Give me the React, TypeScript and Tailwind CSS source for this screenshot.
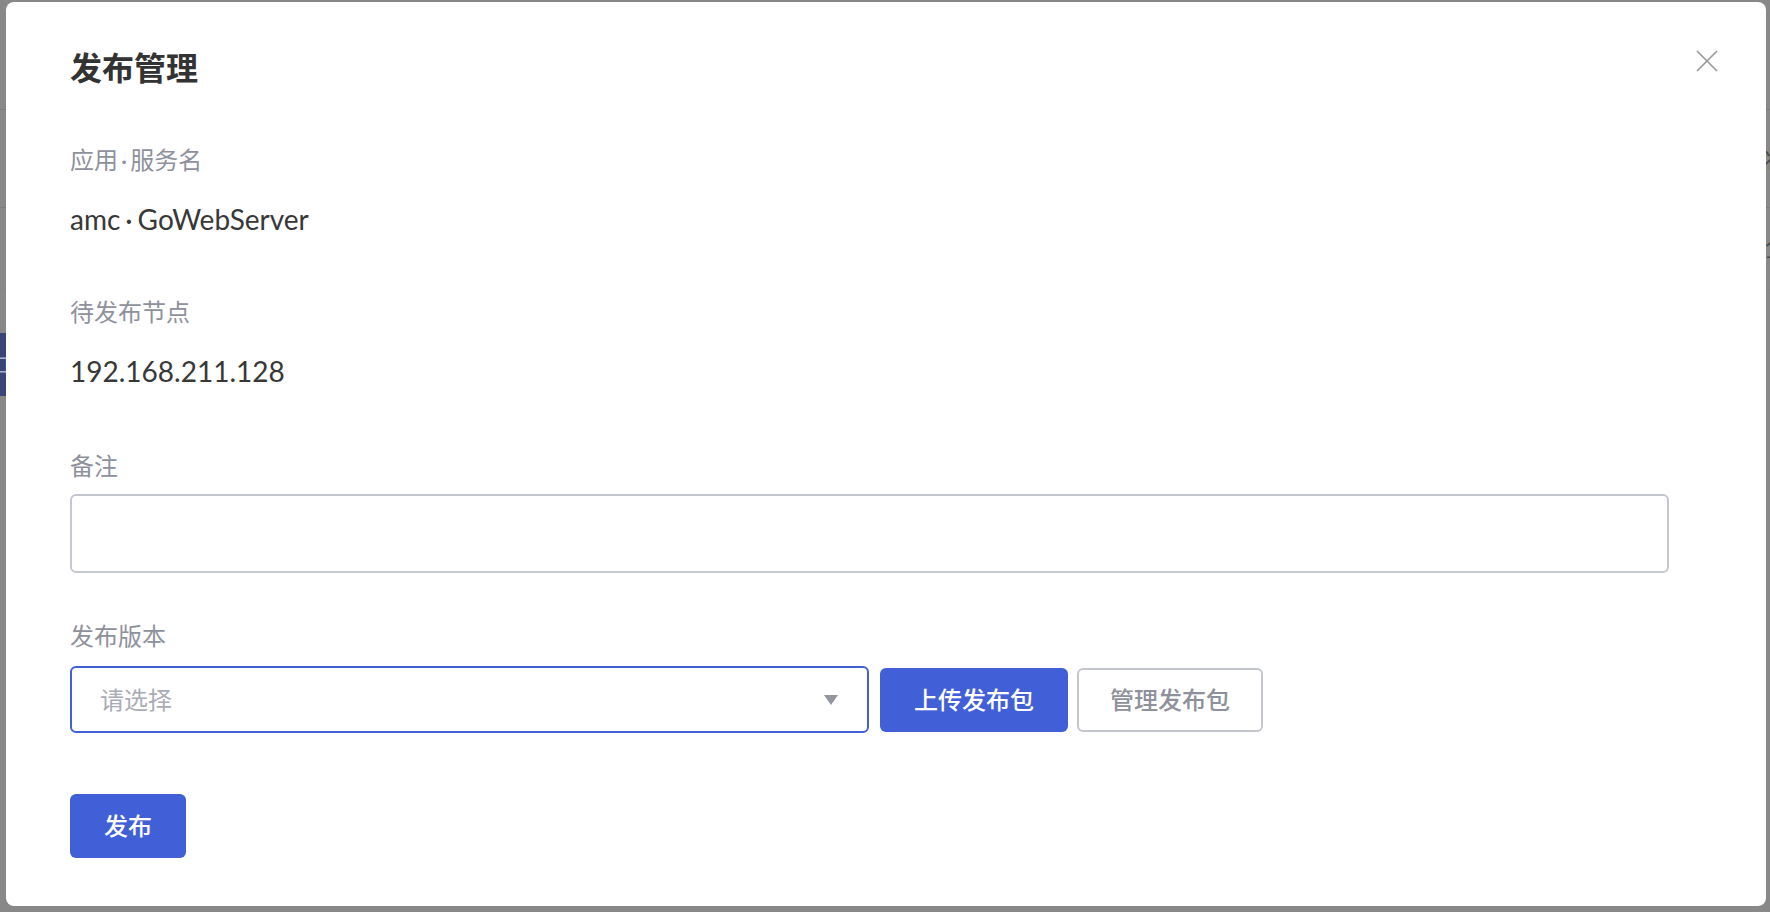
import { useState } from "react";

const labelCls = "text-[24px] leading-[32px] text-[#8e919c]";
const valueCls = "text-[28px] leading-[40px] text-[#383838]";

function BackgroundPage() {
  // the page that sits under the dimmed overlay, only its edges show
  return (
    <div className="flex h-full flex-col">
      <div className="h-[110px] shrink-0 border-b border-[#7d7d7d]" />
      <div className="flex h-[98px] shrink-0 items-center justify-end border-b border-[#7d7d7d]">
        <span className="w-[6px] overflow-hidden whitespace-nowrap text-[24px] text-[#4a4a4a]">状态</span>
      </div>
      <div className="flex h-[82px] shrink-0 items-center justify-end border-b border-[#848484]">
        <span className="w-[6px] overflow-hidden whitespace-nowrap text-[24px] text-[#4a4a4a]">1台</span>
      </div>
      <div className="mt-[43px] flex h-[63px] w-[120px] items-center bg-[#3a4577]">
        <span className="-ml-[10px] text-[20px] text-[#aab0c8]">口</span>
      </div>
    </div>
  );
}

function CloseIcon() {
  return (
    <svg viewBox="0 0 22 22" className="h-[22px] w-[22px]" fill="none" stroke="#999" strokeWidth="1.7">
      <path d="M1 1 L21 21 M21 1 L1 21" />
    </svg>
  );
}

export default function App() {
  const [note, setNote] = useState("");

  return (
    <div className="relative h-[912px] w-full overflow-hidden bg-[#888888] font-['Lato','Noto_Sans_CJK_SC',sans-serif]">
      <BackgroundPage />

      <div className="absolute left-[6px] top-[2px] h-[904px] w-[1760px] rounded-[8px] bg-white pl-[64px] pt-[44px]">
        <button type="button" className="absolute right-[48px] top-[48px]" aria-label="close">
          <CloseIcon />
        </button>

        <h2 className="text-[32px] font-bold leading-[44px] text-[#333]">发布管理</h2>

        <div className={`mt-[54px] ${labelCls}`}>
          应用<span className="mx-[3px]">·</span>服务名
        </div>
        <div className={`mt-[23px] ${valueCls}`}>
          amc<span className="mx-[5px]">·</span>GoWebServer
        </div>

        <div className={`mt-[57px] ${labelCls}`}>待发布节点</div>
        <div className={`mt-[23px] ${valueCls}`}>192.168.211.128</div>

        <div className={`mt-[59px] ${labelCls}`}>备注</div>
        <textarea
          value={note}
          onChange={(e) => setNote(e.target.value)}
          className="mt-[12px] block h-[79px] w-[1599px] resize-none rounded-[6px] border-2 border-[#c5c7ce] px-[28px] py-[16px] text-[24px] text-[#333] outline-none"
        />

        <div className={`mt-[47px] ${labelCls}`}>发布版本</div>
        <div className="mt-[14px] flex items-center">
          <div className="flex h-[67px] w-[799px] items-center justify-between rounded-[6px] border-2 border-[#4160d8] pl-[28px] pr-[29px]">
            <span className="text-[24px] text-[#a9acb6]">请选择</span>
            <svg viewBox="0 0 14 10" className="h-[10px] w-[14px]">
              <path d="M0 0 H14 L7 10 Z" fill="#94969e" />
            </svg>
          </div>
          <button
            type="button"
            className="ml-[11px] flex h-[64px] w-[188px] items-center justify-center rounded-[6px] bg-[#4160d8] text-[24px] font-medium text-white"
          >
            上传发布包
          </button>
          <button
            type="button"
            className="ml-[9px] flex h-[64px] w-[186px] items-center justify-center rounded-[6px] border-2 border-[#c4c6cd] bg-white text-[24px] font-medium text-[#8e919c]"
          >
            管理发布包
          </button>
        </div>

        <button
          type="button"
          className="mt-[61px] flex h-[64px] w-[116px] items-center justify-center rounded-[6px] bg-[#4160d8] text-[24px] font-medium text-white"
        >
          发布
        </button>
      </div>
    </div>
  );
}
